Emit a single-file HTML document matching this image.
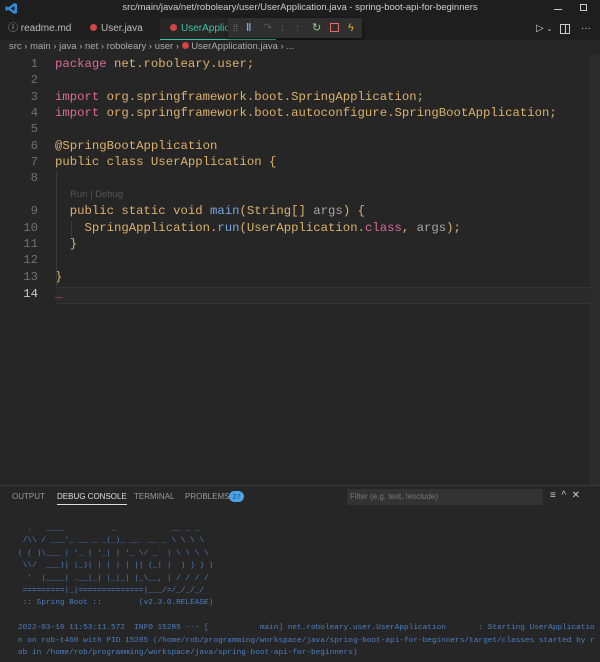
<!DOCTYPE html>
<html><head><meta charset="utf-8"><style>
*{margin:0;padding:0;box-sizing:border-box}
body{width:600px;height:662px;background:#262626;overflow:hidden;position:relative;font-family:"Liberation Sans",sans-serif;}
.abs{position:absolute}
.title{top:0;left:0;width:600px;height:18px;background:#1e1e1e;color:#ccc;font-size:9.5px;text-align:center;line-height:16px}
.tabs{top:18px;left:0;width:600px;height:22px;background:#1f1f1f}
.tab{position:absolute;top:0;height:22px;line-height:21px;font-size:10px;color:#bbb}
.crumb{top:40px;left:0;width:600px;height:15px;font-size:9.5px;color:#aaa;line-height:14px;padding-left:9px;background:#262626}
.code{font-family:"Liberation Mono",monospace;font-size:12.3px;white-space:pre;position:absolute;left:55px;color:#dcb16b}
.ln{font-family:"Liberation Mono",monospace;font-size:12.3px;position:absolute;width:38px;text-align:right;color:#707070;left:0}
.k{color:#d86a97}.f{color:#7aa6da}.g{color:#a6a6a6}
.con{font-family:"Liberation Mono",monospace;font-size:7.75px;white-space:pre;color:#4b7fc4;position:absolute;left:18px;line-height:12.4px}
</style></head><body>
<div class="abs title">src/main/java/net/roboleary/user/UserApplication.java - spring-boot-api-for-beginners</div>
<svg class="abs" style="left:5px;top:2px" width="13" height="13" viewBox="0 0 13 13"><path d="M9.5 1 L12 2.2 V10.8 L9.5 12 L3 7.5 L1.3 9 L0.5 8.5 V4.5 L1.3 4 L3 5.5 Z M9.5 4 L5.5 6.5 L9.5 9 Z" fill="#2f8fdc"/></svg>
<div class="abs" style="left:554px;top:9px;width:8px;height:1px;background:#ccc"></div>
<div class="abs" style="left:580px;top:4px;width:7px;height:7px;border:1px solid #ccc"></div>
<div class="abs tabs">
 <div class="tab" style="left:8px"><span style="color:#aaa">ⓘ</span> readme.md</div>
 <div class="tab" style="left:90px"><span style="display:inline-block;width:7px;height:7px;border-radius:50%;background:#d04545;margin-right:4px"></span>User.java</div>
 <div class="tab" style="left:160px;width:116px;background:#262626;color:#3fc1a5;border-bottom:1px solid #3fc1a5"><span style="display:inline-block;width:7px;height:7px;border-radius:50%;background:#d04545;margin:0 4px 0 10px"></span>UserApplicat</div>
 <div class="tab" style="left:536px;color:#ccc">▷ <span style="font-size:7px">⌄</span></div>
 <div class="abs" style="left:560px;top:6px;width:10px;height:10px;border:1px solid #ccc"><div style="margin-left:4px;width:1px;height:8px;background:#ccc"></div></div>
 <div class="tab" style="left:581px;color:#ccc">···</div>
</div>
<div class="abs" style="left:228px;top:18px;width:134px;height:20px;background:#2f2f2f;box-shadow:0 2px 5px #0008;font-size:11px;line-height:20px;color:#777">
 <span style="position:absolute;left:5px;color:#888;font-size:9px">⁞⁞</span>
 <span style="position:absolute;left:18px;color:#7aa6da;font-weight:bold">ǁ</span>
 <span style="position:absolute;left:35px;color:#555">↷</span>
 <span style="position:absolute;left:52px;color:#555">↓</span>
 <span style="position:absolute;left:67px;color:#555">↑</span>
 <span style="position:absolute;left:84px;color:#89d185">↻</span>
 <div style="position:absolute;left:102px;top:5px;width:9px;height:9px;border:1.5px solid #e06c6c"></div>
 <span style="position:absolute;left:120px;color:#e8b02a">ϟ</span>
</div>
<div class="abs crumb">src › main › java › net › roboleary › user › <span style="display:inline-block;width:7px;height:7px;border-radius:50%;background:#d04545"></span> UserApplication.java › ...</div>
<div class="abs" style="left:56px;top:287px;width:534px;height:17px;border-top:1px solid #333;border-bottom:1px solid #333;background:#2a2a2a"></div>
<div class="abs" style="left:590px;top:55px;width:10px;height:430px;background:#2c2c2c"></div>

<div class="ln" style="top:57px">1</div><div class="code" style="top:57px"><span class="k">package</span> net.roboleary.user;</div>
<div class="ln" style="top:73px">2</div>
<div class="ln" style="top:90px">3</div><div class="code" style="top:90px"><span class="k">import</span> org.springframework.boot.SpringApplication;</div>
<div class="ln" style="top:106px">4</div><div class="code" style="top:106px"><span class="k">import</span> org.springframework.boot.autoconfigure.SpringBootApplication;</div>
<div class="ln" style="top:122px">5</div>
<div class="ln" style="top:139px">6</div><div class="code" style="top:139px">@SpringBootApplication</div>
<div class="ln" style="top:155px">7</div><div class="code" style="top:155px">public class UserApplication {</div>
<div class="ln" style="top:171px">8</div>
<div class="abs" style="left:70px;top:189px;font-size:9.5px;color:#555">Run | Debug</div>
<div class="ln" style="top:204px">9</div><div class="code" style="top:204px">  public static void <span class="f">main</span>(String[] <span class="g">args</span>) {</div>
<div class="ln" style="top:221px">10</div><div class="code" style="top:221px">    SpringApplication.<span class="f">run</span>(UserApplication.<span class="k">class</span>, <span class="g">args</span>);</div>
<div class="ln" style="top:237px">11</div><div class="code" style="top:237px">  }</div>
<div class="ln" style="top:253px">12</div>
<div class="ln" style="top:270px">13</div><div class="code" style="top:270px">}</div>
<div class="ln" style="top:287px;color:#ccc">14</div><div class="code" style="top:287px;color:#e0407a">_</div>
<div class="abs" style="left:56px;top:171px;width:1px;height:115px;background:#3a3a3a"></div>
<div class="abs" style="left:71px;top:221px;width:1px;height:16px;background:#3a3a3a"></div>

<div class="abs" style="left:0;top:485px;width:600px;height:177px;background:#262626;border-top:1px solid #3a3a3a"></div>
<div class="abs" style="top:492px;left:12px;font-size:8px;color:#999">OUTPUT</div>
<div class="abs" style="top:492px;left:57px;font-size:8px;color:#ddd;padding-bottom:3px;border-bottom:1px solid #ddd">DEBUG CONSOLE</div>
<div class="abs" style="top:492px;left:134px;font-size:8px;color:#999">TERMINAL</div>
<div class="abs" style="top:492px;left:185px;font-size:8px;color:#999">PROBLEMS</div>
<div class="abs" style="top:491px;left:229px;width:15px;height:11px;border-radius:6px;background:#4aa3e8;font-size:7.5px;color:#1d4c72;text-align:center;line-height:11px">27</div>
<div class="abs" style="top:489px;left:347px;width:196px;height:16px;background:#333;font-size:8px;color:#777;line-height:16px;padding-left:3px">Filter (e.g. text, !exclude)</div>
<div class="abs" style="top:490px;left:550px;font-size:10px;color:#ccc">≡&nbsp;&nbsp;^&nbsp;&nbsp;✕</div>

<div class="con" style="top:523px">  .   ____          _            __ _ _
 /\\ / ___'_ __ _ _(_)_ __  __ _ \ \ \ \
( ( )\___ | '_ | '_| | '_ \/ _` | \ \ \ \
 \\/  ___)| |_)| | | | | || (_| |  ) ) ) )
  '  |____| .__|_| |_|_| |_\__, | / / / /
 =========|_|==============|___/=/_/_/_/
 :: Spring Boot ::        (v2.3.0.RELEASE)

2022-03-16 11:53:11.572  INFO 15285 --- [           main] net.roboleary.user.UserApplication       : Starting UserApplicatio
n on rob-t460 with PID 15285 (/home/rob/programming/workspace/java/spring-boot-api-for-beginners/target/classes started by r
ob in /home/rob/programming/workspace/java/spring-boot-api-for-beginners)</div>
</body></html>
